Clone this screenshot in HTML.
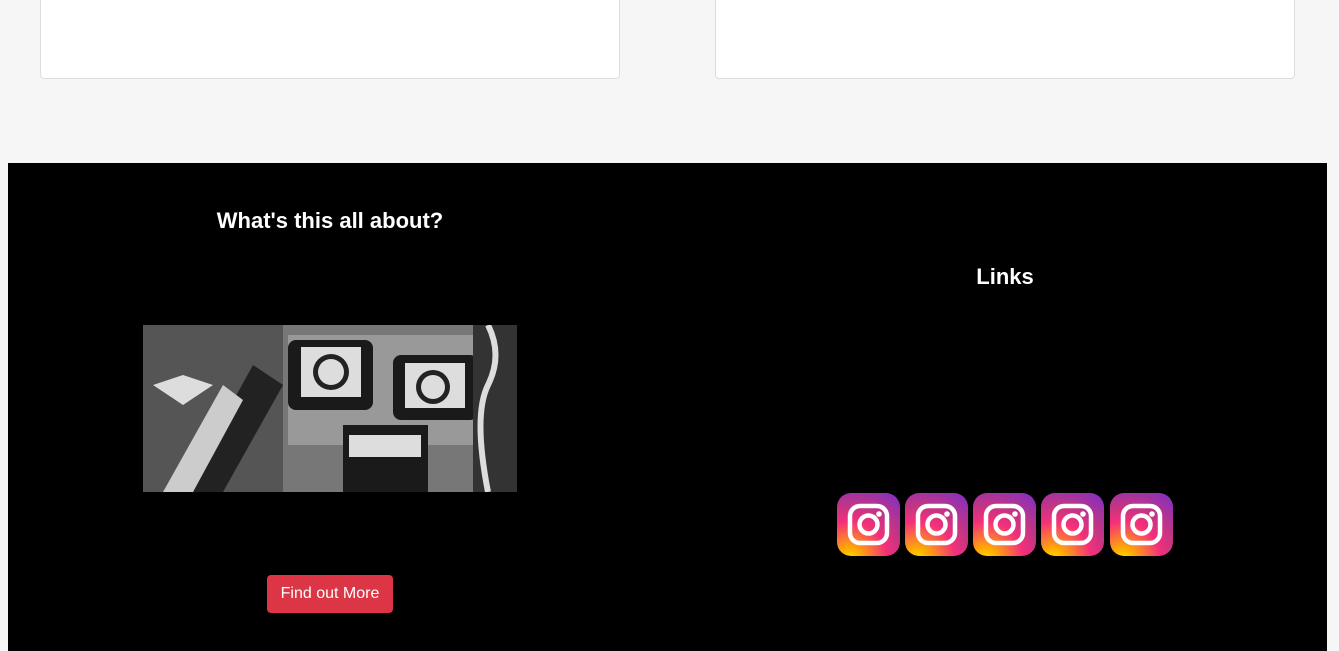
<!DOCTYPE html>
<html><head><style>
*{box-sizing:border-box}
body{margin:0;width:1339px;height:651px;background:#f6f6f6;font-family:"Liberation Sans",sans-serif;position:relative;overflow:hidden}
.card{position:absolute;top:-5px;height:84px;background:#fff;border:1px solid #ddd;border-radius:4px}
.foot{position:absolute;left:8px;top:163px;width:1319px;height:488px;background:#000}
h2{position:absolute;margin:0;color:#fff;font-size:22px;font-weight:bold;text-align:center}
.btn{position:absolute;left:267px;top:575px;width:126px;height:38px;background:#dc3545;color:#fff;border-radius:4px;font-size:16px;line-height:38px;text-align:center}
.ig{position:absolute;top:493px;width:63px;height:63px;border-radius:14px;background:radial-gradient(circle at 20% 105%,#ffdd00 0%,#ffb000 12%,#f5307a 45%,#c13584 65%,#7b2fc9 100%)}
</style></head><body>
<div class="card" style="left:40px;width:580px"></div>
<div class="card" style="left:715px;width:580px"></div>
<div class="foot"></div>
<h2 style="left:130px;width:400px;top:208px">What's this all about?</h2>
<h2 style="left:805px;width:400px;top:264px">Links</h2>
<svg style="position:absolute;left:143px;top:325px" width="374" height="167" viewBox="0 0 374 167">
<rect width="374" height="167" fill="#777"/>
<path d="M0 0h140v167H0z" fill="#555"/>
<path d="M10 60l30-10 30 10-30 20z" fill="#ddd"/>
<path d="M40 167L110 40l30 20-60 107z" fill="#222"/>
<path d="M20 167L80 60l20 15-50 92z" fill="#ccc"/>
<rect x="145" y="10" width="200" height="110" fill="#999"/>
<rect x="145" y="15" width="85" height="70" rx="8" fill="#1a1a1a"/>
<rect x="158" y="22" width="60" height="50" fill="#ddd"/>
<circle cx="188" cy="47" r="18" fill="#222"/><circle cx="188" cy="47" r="13" fill="#ddd"/>
<rect x="250" y="30" width="85" height="65" rx="8" fill="#1a1a1a"/>
<rect x="262" y="38" width="60" height="45" fill="#ddd"/>
<circle cx="290" cy="62" r="17" fill="#222"/><circle cx="290" cy="62" r="12" fill="#ddd"/>
<rect x="200" y="100" width="85" height="67" fill="#1a1a1a"/>
<rect x="206" y="110" width="72" height="22" fill="#ddd"/>
<path d="M330 0h44v167h-44z" fill="#333"/>
<path d="M345 0q15 30 0 60t0 107" stroke="#ddd" stroke-width="6" fill="none"/>
</svg>
<div class="btn">Find out More</div>
<svg width="0" height="0" style="position:absolute"><defs><g id="g"><rect x="13" y="13" width="37" height="37" rx="10" fill="none" stroke="#fff" stroke-width="4.5"/><circle cx="31.5" cy="31.5" r="9" fill="none" stroke="#fff" stroke-width="4.5"/><circle cx="42" cy="21" r="2.8" fill="#fff"/></g></defs></svg>
<div class="ig" style="left:837px"><svg width="63" height="63"><use href="#g"/></svg></div>
<div class="ig" style="left:905px"><svg width="63" height="63"><use href="#g"/></svg></div>
<div class="ig" style="left:973px"><svg width="63" height="63"><use href="#g"/></svg></div>
<div class="ig" style="left:1041px"><svg width="63" height="63"><use href="#g"/></svg></div>
<div class="ig" style="left:1110px"><svg width="63" height="63"><use href="#g"/></svg></div>
</body></html>
